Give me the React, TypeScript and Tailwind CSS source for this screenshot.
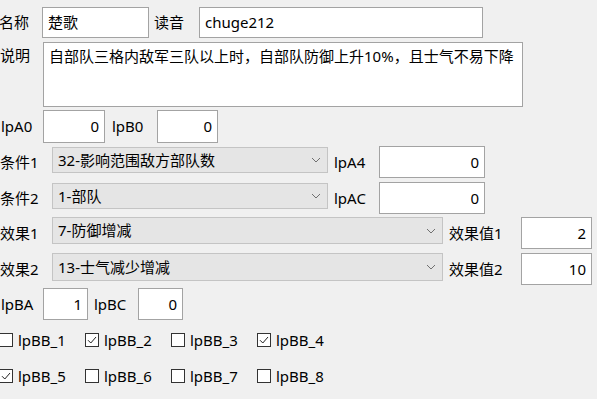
import React from 'react';

const font = 'font-["Noto_Sans","Noto_Sans_CJK_SC",sans-serif]';

function Field({ value, className, right }: { value: string; className: string; right?: boolean }) {
  return (
    <div
      className={`bg-white border border-[#a3a3a3] flex items-center px-[5px] text-[15px] text-black ${
        right ? 'justify-end' : ''
      } ${className}`}
    >
      {value}
    </div>
  );
}

function Combo({ value, className }: { value: string; className: string }) {
  return (
    <div
      className={`bg-[#e5e5e5] border border-[#c4c4c4] flex items-center justify-between pl-[5px] pr-[6px] text-[15px] text-black ${className}`}
    >
      <span>{value}</span>
      <svg width="10" height="6" viewBox="0 0 10 6" fill="none">
        <path d="M1 1l4 4 4-4" stroke="#707070" strokeWidth="1" />
      </svg>
    </div>
  );
}

function Check({ label, checked }: { label: string; checked?: boolean }) {
  return (
    <div className="w-[86px] flex items-center">
      <div className="w-[14px] h-[14px] border border-[#333] bg-white flex items-center justify-center">
        {checked && (
          <svg width="12" height="12" viewBox="0 0 12 12" fill="none">
            <path d="M2 6.2l2.8 2.8L10 3" stroke="#222" strokeWidth="1" />
          </svg>
        )}
      </div>
      <span className="ml-[5px] text-[15px]">{label}</span>
    </div>
  );
}

export default function App() {
  return (
    <div className={`w-[597px] h-[399px] overflow-hidden bg-[#f0f0f0] text-black ${font} flex flex-col`}>
      <div className="mt-[7px] h-[31px] flex items-center">
        <span className="w-[43px] text-[15px] -ml-[1px] pl-0">名称</span>
        <Field value="楚歌" className="w-[107px] h-[31px]" />
        <span className="ml-[5px] w-[45px] text-[15px]">读音</span>
        <Field value="chuge212" className="w-[284px] h-[31px]" />
      </div>

      <div className="mt-[4px] h-[65px] flex items-start">
        <span className="w-[43px] text-[15px] pt-[2px]">说明</span>
        <div className="w-[480px] h-[65px] bg-white border border-[#a3a3a3] px-[5px] pt-[2px] text-[15px] leading-[22px]">
          自部队三格内敌军三队以上时，自部队防御上升10%，且士气不易下降
        </div>
      </div>

      <div className="mt-[3px] h-[33px] flex items-center">
        <span className="w-[43px] text-[15px] pl-[1px]">lpA0</span>
        <Field value="0" right className="w-[62px] h-[33px]" />
        <span className="ml-[7px] w-[45px] text-[15px]">lpB0</span>
        <Field value="0" right className="w-[61px] h-[33px]" />
      </div>

      <div className="mt-[3px] h-[32px] flex items-center">
        <span className="w-[52px] text-[15px]">条件1</span>
        <Combo value="32-影响范围敌方部队数" className="w-[276px] h-[26px] self-start mt-[1px]" />
        <span className="ml-[6px] w-[45px] text-[15px]">lpA4</span>
        <Field value="0" right className="w-[106px] h-[32px]" />
      </div>

      <div className="mt-[4px] h-[32px] flex items-center">
        <span className="w-[52px] text-[15px]">条件2</span>
        <Combo value="1-部队" className="w-[276px] h-[26px] self-start mt-[1px]" />
        <span className="ml-[6px] w-[45px] text-[15px]">lpAC</span>
        <Field value="0" right className="w-[106px] h-[32px]" />
      </div>

      <div className="mt-[3px] h-[32px] flex items-center">
        <span className="w-[52px] text-[15px]">效果1</span>
        <Combo value="7-防御增减" className="w-[391px] h-[27px] self-start" />
        <span className="ml-[6px] w-[72px] text-[15px]">效果值1</span>
        <Field value="2" right className="w-[71px] h-[32px]" />
      </div>

      <div className="mt-[4px] h-[32px] flex items-center">
        <span className="w-[52px] text-[15px]">效果2</span>
        <Combo value="13-士气减少增减" className="w-[391px] h-[28px] self-start" />
        <span className="ml-[6px] w-[72px] text-[15px]">效果值2</span>
        <Field value="10" right className="w-[71px] h-[32px]" />
      </div>

      <div className="mt-[3px] h-[32px] flex items-center">
        <span className="w-[43px] text-[15px] pl-[1px]">lpBA</span>
        <Field value="1" right className="w-[45px] h-[32px]" />
        <span className="ml-[6px] w-[44px] text-[15px]">lpBC</span>
        <Field value="0" right className="w-[45px] h-[32px]" />
      </div>

      <div className="mt-[8px] h-[24px] flex items-center -ml-[1px]">
        <Check label="lpBB_1" />
        <Check label="lpBB_2" checked />
        <Check label="lpBB_3" />
        <Check label="lpBB_4" checked />
      </div>

      <div className="mt-[12px] h-[24px] flex items-center -ml-[1px]">
        <Check label="lpBB_5" checked />
        <Check label="lpBB_6" />
        <Check label="lpBB_7" />
        <Check label="lpBB_8" />
      </div>
    </div>
  );
}
